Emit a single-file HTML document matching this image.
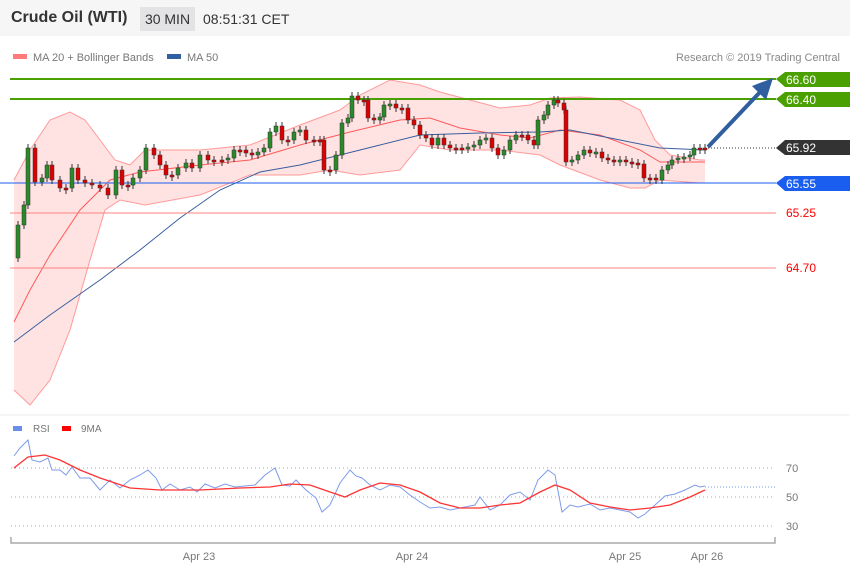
<!DOCTYPE html>
<html><head><meta charset="utf-8"><style>
body{margin:0;width:850px;height:576px;background:#fff;font-family:"Liberation Sans",sans-serif;overflow:hidden;position:relative}
.hdr{position:absolute;left:0;top:0;width:850px;height:36px;background:#f6f6f6}
.t{position:absolute;left:11px;top:9px;font-size:16px;font-weight:bold;color:#333}
.tf{position:absolute;left:140px;top:7px;width:55px;height:24px;background:#e3e3e6;color:#333;font-size:14px;line-height:24px;text-align:center}
.tm{position:absolute;left:203px;top:11px;font-size:14px;color:#333}
svg{position:absolute;left:0;top:0}
</style></head><body>
<div class="hdr"></div>
<div class="t">Crude Oil (WTI)</div>
<div class="tf">30 MIN</div>
<div class="tm">08:51:31 CET</div>
<svg id="s" width="850" height="576" font-family="Liberation Sans, sans-serif">
<rect x="13" y="54" width="14" height="5" fill="#ff7b7b"/>
<text x="33" y="61" font-size="11" fill="#777">MA 20 + Bollinger Bands</text>
<rect x="167" y="54" width="14" height="5" fill="#3060a0"/>
<text x="187" y="61" font-size="11" fill="#777">MA 50</text>
<text x="840" y="61" font-size="11" fill="#888" text-anchor="end">Research © 2019 Trading Central</text>
<path d="M14,180 L30,150 L50,120 L70,112 L85,120 L100,140 L115,160 L130,165 L145,150 L160,150 L200,150 L250,145 L300,125 L340,110 L360,95 L390,80 L420,85 L440,92 L470,100 L500,108 L530,105 L550,98 L580,97 L620,100 L640,110 L655,140 L670,155 L700,160 L705,160 L705,183 L700,183 L660,180 L645,188 L630,188 L600,180 L560,165 L540,155 L500,150 L450,150 L420,145 L400,170 L360,175 L330,170 L300,175 L250,175 L200,195 L145,205 L120,200 L105,210 L90,260 L70,330 L50,380 L30,405 L14,390 Z" fill="#ffe3e3"/>
<polyline fill="none" stroke="#ff9a9a" stroke-width="1" points="14,180 30,150 50,120 70,112 85,120 100,140 115,160 130,165 145,150 160,150 200,150 250,145 300,125 340,110 360,95 390,80 420,85 440,92 470,100 500,108 530,105 550,98 580,97 620,100 640,110 655,140 670,155 700,160 705,160"/>
<polyline fill="none" stroke="#ff9a9a" stroke-width="1" points="14,390 30,405 50,380 70,330 90,260 105,210 120,200 145,205 200,195 250,175 300,175 330,170 360,175 400,170 420,145 450,150 500,150 540,155 560,165 600,180 630,188 645,188 660,180 700,183 705,183"/>
<polyline fill="none" stroke="#ff5a5a" stroke-width="1" points="14,322 30,290 50,255 80,210 110,180 140,172 200,165 250,160 300,145 350,132 400,120 430,118 460,128 500,135 530,138 560,130 600,135 640,150 660,162 705,162"/>
<polyline fill="none" stroke="#3a5e9e" stroke-width="1" points="14,342 50,315 100,280 140,250 180,218 220,190 260,172 300,165 340,155 380,145 420,135 480,133 540,132 570,130 620,140 660,148 705,150"/>
<line x1="10" y1="79" x2="776" y2="79" stroke="#4aa000" stroke-width="2"/>
<line x1="10" y1="99" x2="776" y2="99" stroke="#4aa000" stroke-width="2"/>
<line x1="0" y1="183" x2="776" y2="183" stroke="#1a5ef0" stroke-width="1"/>
<line x1="10" y1="213" x2="776" y2="213" stroke="#ff8080" stroke-width="1"/>
<line x1="10" y1="268" x2="776" y2="268" stroke="#ff8080" stroke-width="1"/>
<line x1="705" y1="148" x2="776" y2="148" stroke="#334" stroke-width="1" stroke-dasharray="1,2"/>
<g id="c"></g>
<line x1="708" y1="147" x2="762" y2="90" stroke="#2f5f9f" stroke-width="4"/>
<polygon points="773,78 752,86 766,100" fill="#2f5f9f"/>
<polygon points="776,79 785,72 850,72 850,87 785,87" fill="#4aa000"/>
<text x="786" y="84" font-size="12" fill="#fff">66.60</text>
<polygon points="776,99 785,92 850,92 850,107 785,107" fill="#4aa000"/>
<text x="786" y="104" font-size="12" fill="#fff">66.40</text>
<polygon points="776,148 785,140 850,140 850,155 785,155" fill="#333"/>
<text x="786" y="152" font-size="12" fill="#fff">65.92</text>
<polygon points="776,183 785,176 850,176 850,191 785,191" fill="#1a5ef0"/>
<text x="786" y="188" font-size="12" fill="#fff">65.55</text>
<text x="786" y="217" font-size="12" fill="#f00">65.25</text>
<text x="786" y="272" font-size="12" fill="#f00">64.70</text>
<line x1="0" y1="415" x2="850" y2="415" stroke="#eee"/>
<rect x="13" y="426" width="9" height="5" fill="#6a8fe8"/>
<text x="33" y="432" font-size="10" fill="#777">RSI</text>
<rect x="62" y="426" width="9" height="5" fill="#f00"/>
<text x="81" y="432" font-size="10" fill="#777">9MA</text>
<g stroke="#aaa" stroke-dasharray="1,3"><line x1="11" y1="468" x2="775" y2="468"/><line x1="11" y1="497" x2="775" y2="497"/><line x1="11" y1="526" x2="775" y2="526"/></g>
<g font-size="11" fill="#777"><text x="786" y="472">70</text><text x="786" y="501">50</text><text x="786" y="530">30</text>
<text x="199" y="560" text-anchor="middle">Apr 23</text><text x="412" y="560" text-anchor="middle">Apr 24</text><text x="625" y="560" text-anchor="middle">Apr 25</text><text x="707" y="560" text-anchor="middle">Apr 26</text></g>
<path d="M11,537 V543 H775 V537" fill="none" stroke="#aaa" stroke-width="1.5"/>
<polyline fill="none" stroke="#7d9bea" stroke-width="1" points="14,456 20,448 28,440 32,460 40,462 48,458 52,470 60,470 66,475 72,467 80,478 90,478 100,490 110,480 120,488 130,480 140,475 148,470 156,478 162,490 170,484 180,490 190,487 197,492 205,484 215,488 225,484 235,487 245,486 255,485 265,475 275,468 282,485 290,486 296,480 306,490 316,498 322,512 330,505 340,483 350,470 356,476 362,478 370,485 380,490 390,485 400,487 410,495 420,502 430,508 440,507 450,510 460,508 475,505 480,497 490,510 500,505 510,495 520,492 530,500 538,480 548,470 555,475 562,512 570,505 578,507 590,504 600,510 610,508 620,510 630,512 638,518 645,514 655,505 665,496 675,494 685,490 695,485 700,487 705,486"/>
<line x1="705" y1="487" x2="775" y2="487" stroke="#7d9bea" stroke-dasharray="1,2"/>
<polyline fill="none" stroke="#f33" stroke-width="1.3" points="14,468 28,457 45,455 60,460 80,470 100,478 130,488 160,490 200,490 240,488 270,487 290,484 310,485 330,492 345,497 360,490 380,483 400,485 420,492 440,503 460,508 480,508 500,505 520,503 540,492 555,485 570,490 590,503 610,507 630,510 650,508 670,505 690,497 705,490"/>
</svg>
<script>
(function(){
var p=[[14,258],[18,225],[24,205],[28,148],[35,182],[42,178],[47,165],[52,180],[60,188],[66,188],[72,168],[78,180],[85,183],[92,185],[100,188],[108,195],[116,170],[122,185],[128,185],[133,178],[140,170],[146,148],[154,155],[160,165],[166,175],[172,175],[178,168],[186,163],[192,168],[200,155],[208,160],[214,160],[222,160],[228,158],[234,150],[240,150],[246,153],[252,155],[258,152],[264,148],[270,132],[276,126],[282,140],[288,140],[294,132],[300,130],[306,140],[314,140],[320,140],[324,170],[330,170],[336,155],[342,123],[348,118],[352,96],[358,100],[364,100],[368,118],[374,120],[380,117],[384,105],[390,104],[396,108],[402,108],[408,120],[414,125],[420,135],[426,138],[432,145],[438,138],[444,145],[450,148],[456,148],[462,148],[468,147],[474,145],[480,140],[486,138],[492,148],[498,155],[504,150],[510,140],[516,135],[522,135],[528,140],[534,145],[538,120],[544,115],[548,105],[554,100],[558,103],[564,110],[566,162],[572,160],[578,155],[584,150],[590,153],[596,152],[602,158],[608,160],[614,162],[620,160],[626,162],[632,163],[638,164],[644,178],[650,178],[656,180],[662,170],[668,165],[672,160],[678,158],[684,157],[690,155],[694,148],[700,148],[705,148]];
var g=document.getElementById('c'),h='';
for(var i=1;i<p.length;i++){var a=p[i-1][1],b=p[i][1],up=b<a,tt=Math.min(a,b),ht=Math.max(Math.abs(a-b),2),x=p[i][0];
h+='<line x1="'+x+'" y1="'+(tt-4)+'" x2="'+x+'" y2="'+(tt+ht+4)+'" stroke="#333" stroke-width="1"/>';
h+='<rect x="'+(x-2)+'" y="'+tt+'" width="4" height="'+ht+'" fill="'+(up?'#2a8a2a':'#d00')+'" stroke="#333" stroke-width="0.5"/>';}
g.innerHTML=h;
})();
</script>
</body></html>
